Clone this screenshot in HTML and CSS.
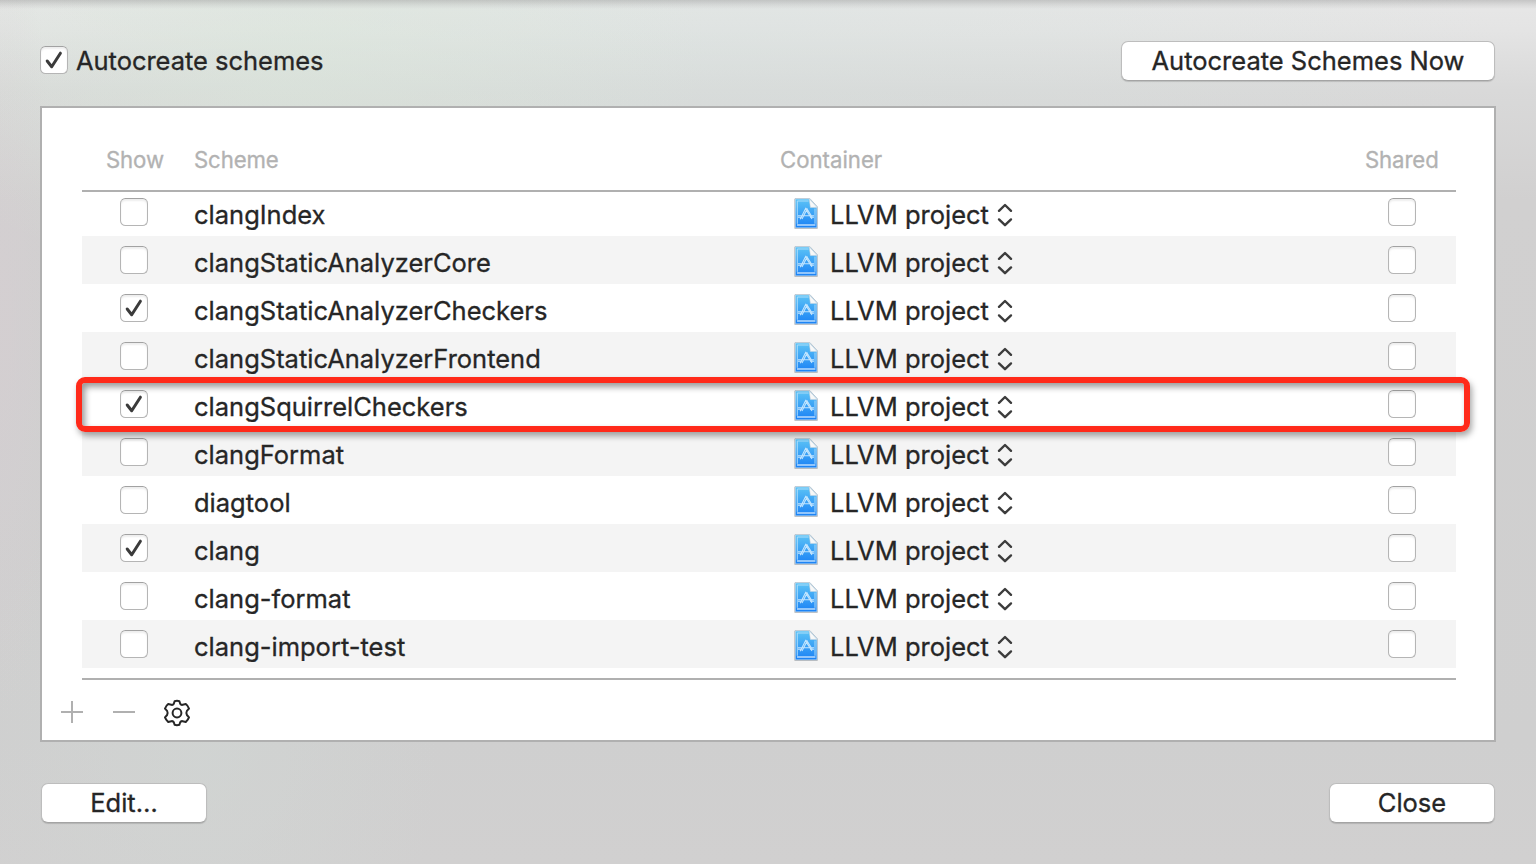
FILE: index.html
```html
<!DOCTYPE html>
<html lang="en">
<head>
<meta charset="utf-8">
<title>Manage Schemes</title>
<link rel="stylesheet" href="styles.css">
</head>
<body>
<svg class="symbols" width="0" height="0" aria-hidden="true">
  <defs>
    <linearGradient id="blue" x1="0" y1="0" x2="0" y2="1"><stop offset="0" stop-color="#5cc3f6"/><stop offset="1" stop-color="#1b82f5"/></linearGradient>
    <symbol id="check" viewBox="0 0 28 28"><path d="M7.2 15l4.5 5.7L20.4 7.2" fill="none" stroke="#3b3b3b" stroke-width="3" stroke-linecap="round" stroke-linejoin="round"/></symbol>
    <symbol id="doc" viewBox="0 0 26 34">
      <path d="M1.4 2h16l7.3 8v22H1.4z" fill="#777" opacity=".4"/>
      <path d="M2 1.5h14.8l7.4 8V31H2z" fill="#d3ebfb" stroke="#a3b4c2" stroke-width=".6"/>
      <path d="M2.6 2.2h14l7 8V30.4H2.6z" fill="url(#blue)"/>
      <path d="M4.3 26.8V4H15.6M22 11.5v15.3" fill="none" stroke="#b5e1fb" stroke-width=".9"/>
      <path d="M4 28h18.4" stroke="#dff1ff" stroke-width="1.2"/>
      <path d="M16.2 1.8l7.8 8.6h-6.6z" fill="#f8f8f8" stroke="#c9d3da" stroke-width=".5"/>
      <path d="M13 10.8L7.2 22.2M12.3 11.6L19 22M14.4 11.4L9 22M5 18.8h16M5 20.2h4M17 20.2h4M13.6 11.2l6 9.6" fill="none" stroke="#d2ecff" stroke-width="1.1" opacity=".9"/>
    </symbol>
    <symbol id="updown" viewBox="0 0 16 24"><path d="M2 7.8L8 2l6 5.8M2 16.4L8 22.2l6-5.8" fill="none" stroke="#3c3c3c" stroke-width="2.4" stroke-linecap="round" stroke-linejoin="round"/></symbol>
  </defs>
</svg>
<main class="sheet">
  <header class="bar top">
    <label class="auto"><span class="box"><svg><use href="#check"/></svg></span><span class="auto-text">Autocreate schemes</span></label>
    <button class="btn wide"><span>Autocreate Schemes Now</span></button>
  </header>
  <section class="panel">
    <div class="table">
      <div class="row head"><span class="show">Show</span><span class="scheme">Scheme</span><span class="container">Container</span><span class="shared">Shared</span></div>
      <div class="rows" id="rows"></div>
      <div class="highlight"></div>
    </div>
    <div class="tools">
      <svg class="plus" viewBox="0 0 22 22"><path d="M0 11h22M11 0v22" stroke="#b0b0b0" stroke-width="2"/></svg>
      <svg class="minus" viewBox="0 0 22 22"><path d="M0 11h22" stroke="#b0b0b0" stroke-width="2"/></svg>
      <svg class="gear" viewBox="0 0 28 28" fill="none" stroke="#262626" stroke-width="2" stroke-linejoin="round"><path d="M11.6 2.2Q14 1.5 16.4 2.2L17.2 4.7Q18 6.2 19.7 5.8L22.8 5.1Q25 6.9 26 9.6L23.9 11.9Q22.8 14 23.9 16L26 18.4Q25 21.1 22.8 22.9L19.7 22.2Q18 21.8 17.2 23.3L16.4 25.8Q14 26.5 11.6 25.8L10.8 23.3Q10 21.8 8.3 22.2L5.2 22.9Q3 21.1 2 18.4L4.1 16Q5.2 14 4.1 11.9L2 9.6Q3 6.9 5.2 5.1L8.3 5.8Q10 6.2 10.8 4.7Z"/><circle cx="14" cy="14" r="4.4"/></svg>
    </div>
  </section>
  <footer class="bar bottom">
    <button class="btn"><span>Edit…</span></button>
    <button class="btn"><span>Close</span></button>
  </footer>
</main>
<script src="rows.js"></script>
</body>
</html>
```

FILE: styles.css
```css
* { box-sizing: border-box; }
body {
  margin: 0;
  font-family: Inter, "Liberation Sans", sans-serif;
  font-size: 25.5px;
  color: #262626;
  -webkit-text-stroke: .3px currentColor;
}
svg { display: block; }
.symbols { position: absolute; }
.sheet {
  width: 1536px;
  height: 864px;
  padding: 0 40px;
  overflow: hidden;
  background:
    linear-gradient(rgba(150,150,150,.42), rgba(180,180,180,.25) 5px, transparent 9px),
    radial-gradient(ellipse 420px 230px at 290px 60px, rgba(218,232,218,.5), transparent),
    radial-gradient(ellipse 800px 200px at 700px 50px, rgba(214,226,222,.4), transparent),
    radial-gradient(ellipse 60px 400px at 0 320px, rgba(214,206,210,.6), transparent),
    radial-gradient(ellipse 240px 300px at 200px 760px, rgba(210,216,213,.5), transparent),
    linear-gradient(#e7e7e7 0, #e4e4e4 30px, #d9d9d9 90px, #d1d0d0 200px, #cfcfcf 740px, #d1d0d0 864px);
}
.bar { display: flex; justify-content: space-between; }
.top { height: 106px; padding: 41px 1px 0 0; }
.auto { display: flex; gap: 8px; height: 28px; margin-top: 5px; line-height: 30px; }
.auto-text { letter-spacing: -.03px; white-space: nowrap; }
.box {
  display: block;
  width: 28px;
  height: 28px;
  border: 1px solid #b5b5b5;
  border-top-color: #a2a2a2;
  border-radius: 5.5px;
  background: #fff;
  box-shadow: inset 0 2px 2px rgba(0,0,0,.07);
}
.box svg { width: 28px; height: 28px; margin: -1px; }
.btn {
  width: 166px;
  height: 40px;
  padding: 0;
  border: 1px solid #bdbdbd;
  border-bottom-color: #a4a4a4;
  border-radius: 7px;
  background: #fff;
  box-shadow: 0 1px 1px rgba(0,0,0,.14);
  font: inherit;
  color: inherit;
  line-height: 38px;
  white-space: nowrap;
}
.wide { width: 374px; }
.panel {
  height: 636px;
  border: 2px solid #b0b0b0;
  background: #fff;
  padding: 0 38px 0 40px;
}
.table {
  position: relative;
  height: 572px;
  border-bottom: 2px solid #b0b0b0;
}
.row {
  display: grid;
  grid-template-columns: 112px 586px 568px 108px;
  height: 48px;
}
.head {
  height: 84px;
  border-bottom: 2px solid #b0b0b0;
  color: #b2b2b2;
  font-size: 22.2px;
  letter-spacing: -.12px;
  line-height: 104px;
}
.head .show { padding-left: 24px; }
.head .container { letter-spacing: 0; }
.head .shared { padding-left: 17px; }
.data:nth-child(even) { background: #f4f4f4; }
.data:first-child { height: 44px; }
.data:first-child > * { margin-top: -4px; }
.data .box { margin-top: 10px; margin-left: 38px; }
.data:first-child .box { margin-top: 6px; }
.data .last { margin-left: 40px; }
.name { line-height: 54px; white-space: nowrap; }
.project { display: flex; padding-left: 13px; line-height: 54px; white-space: nowrap; }
.doc { width: 26px; height: 34px; margin: 9px 11px 0 0; }
.project-text { width: 159px; }
.updown { width: 16px; height: 24px; margin: 15px 0 0 8px; }
.highlight {
  position: absolute;
  left: -6px;
  top: 269px;
  width: 1394px;
  height: 55px;
  border: 6px solid #ff2a1a;
  border-radius: 9px;
  box-shadow: 2px 4px 6px rgba(0,0,0,.35), inset 3px 4px 6px rgba(0,0,0,.4);
}
.tools { display: flex; padding-top: 21px; margin-left: -21px; }
.plus { width: 22px; height: 22px; }
.minus { width: 22px; height: 22px; margin-left: 30px; }
.gear { width: 28px; height: 28px; margin: -2px 0 0 28px; }
.bottom { padding: 41px 1px 0; }
```

FILE: rows.js
```js
const schemes = [
  ["clangIndex", false],
  ["clangStaticAnalyzerCore", false],
  ["clangStaticAnalyzerCheckers", true],
  ["clangStaticAnalyzerFrontend", false],
  ["clangSquirrelCheckers", true],
  ["clangFormat", false],
  ["diagtool", false],
  ["clang", true],
  ["clang-format", false],
  ["clang-import-test", false]
];
document.getElementById("rows").innerHTML = schemes.map(([name, shown]) => `
  <div class="row data">
    <span class="box">${shown ? '<svg><use href="#check"/></svg>' : ''}</span>
    <span><span class="name">${name}</span></span>
    <span class="project"><svg class="doc"><use href="#doc"/></svg><span class="project-text">LLVM project</span><svg class="updown"><use href="#updown"/></svg></span>
    <span class="box last"></span>
  </div>`).join("");
```
